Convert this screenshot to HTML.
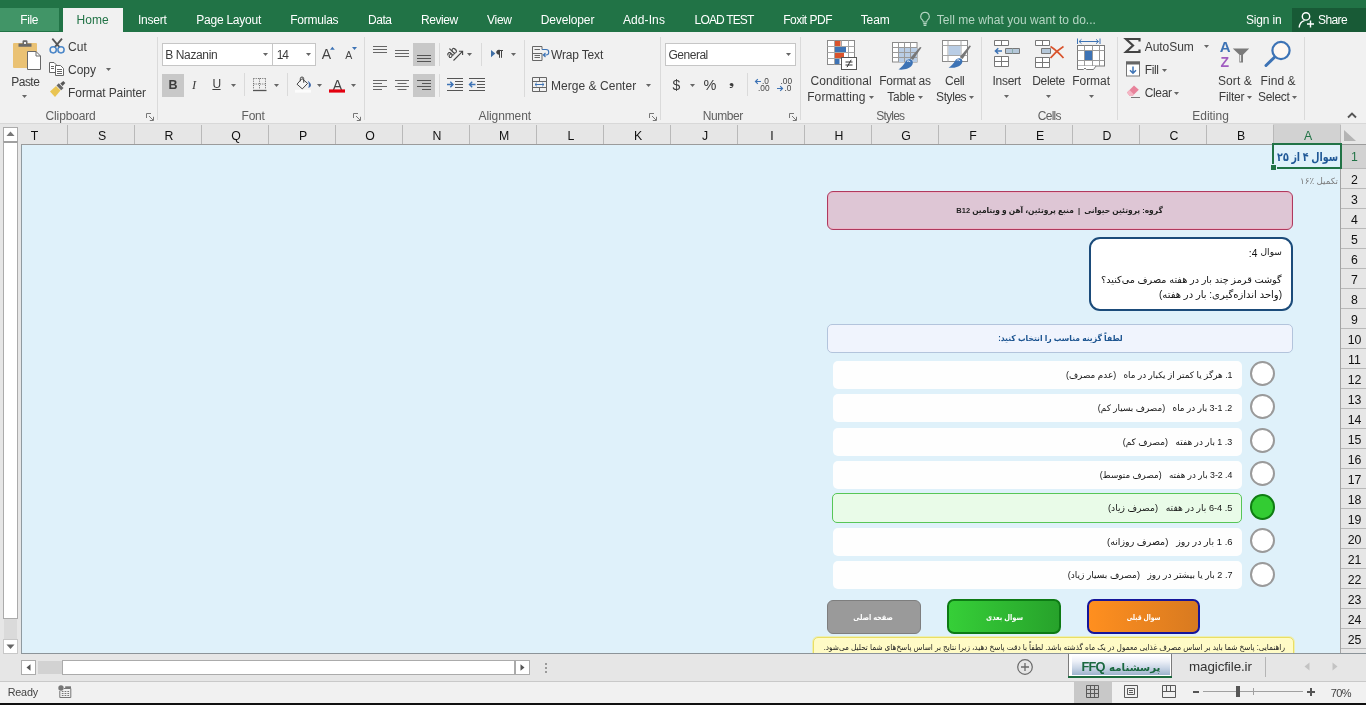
<!DOCTYPE html>
<html lang="fa"><head><meta charset="utf-8"><title>FFQ - Excel</title>
<style>
html,body{margin:0;padding:0;}
body{width:1366px;height:705px;overflow:hidden;background:#f1f1f1;font-family:'Liberation Sans',sans-serif;}
#app{will-change:transform;position:relative;width:1366px;height:705px;overflow:hidden;background:#f1f1f1;}
.b{position:absolute;box-sizing:border-box;display:block;}
.t{position:absolute;white-space:pre;display:block;}
.ch{font-size:12.3px;line-height:18px;text-align:center;}
.rh{font-size:12.3px;line-height:20px;text-align:center;}

</style></head>
<body>
<div id="app">
<div class="b" style="left:0px;top:0px;width:1366px;height:32px;background:#217346;"></div>
<div class="b" style="left:0px;top:8px;width:59px;height:23px;background:#419567;"></div>
<div class="b" style="left:63px;top:8px;width:60px;height:25px;background:#f1f1f1;"></div>
<div class="b" style="left:1292px;top:8px;width:74px;height:24px;background:#185a36;"></div>
<span class="t" style="left:20.2px;top:13.04px;font-size:12px;line-height:15.6px;color:#ffffff;font-weight:400;font-family:'Liberation Sans',sans-serif;letter-spacing:-0.384px;">File</span>
<span class="t" style="left:76.4px;top:13.04px;font-size:12px;line-height:15.6px;color:#217346;font-weight:400;font-family:'Liberation Sans',sans-serif;letter-spacing:0.097px;">Home</span>
<span class="t" style="left:138px;top:13.04px;font-size:12px;line-height:15.6px;color:#ffffff;font-weight:400;font-family:'Liberation Sans',sans-serif;letter-spacing:-0.219px;">Insert</span>
<span class="t" style="left:196.3px;top:13.04px;font-size:12px;line-height:15.6px;color:#ffffff;font-weight:400;font-family:'Liberation Sans',sans-serif;letter-spacing:-0.244px;">Page Layout</span>
<span class="t" style="left:290.2px;top:13.04px;font-size:12px;line-height:15.6px;color:#ffffff;font-weight:400;font-family:'Liberation Sans',sans-serif;letter-spacing:-0.226px;">Formulas</span>
<span class="t" style="left:368px;top:13.04px;font-size:12px;line-height:15.6px;color:#ffffff;font-weight:400;font-family:'Liberation Sans',sans-serif;letter-spacing:-0.437px;">Data</span>
<span class="t" style="left:420.9px;top:13.04px;font-size:12px;line-height:15.6px;color:#ffffff;font-weight:400;font-family:'Liberation Sans',sans-serif;letter-spacing:-0.391px;">Review</span>
<span class="t" style="left:486.9px;top:13.04px;font-size:12px;line-height:15.6px;color:#ffffff;font-weight:400;font-family:'Liberation Sans',sans-serif;letter-spacing:-0.224px;">View</span>
<span class="t" style="left:540.7px;top:13.04px;font-size:12px;line-height:15.6px;color:#ffffff;font-weight:400;font-family:'Liberation Sans',sans-serif;letter-spacing:-0.122px;">Developer</span>
<span class="t" style="left:622.9px;top:13.04px;font-size:12px;line-height:15.6px;color:#ffffff;font-weight:400;font-family:'Liberation Sans',sans-serif;letter-spacing:0.106px;">Add-Ins</span>
<span class="t" style="left:694.6px;top:13.04px;font-size:12px;line-height:15.6px;color:#ffffff;font-weight:400;font-family:'Liberation Sans',sans-serif;letter-spacing:-0.84px;">LOAD TEST</span>
<span class="t" style="left:783.2px;top:13.04px;font-size:12px;line-height:15.6px;color:#ffffff;font-weight:400;font-family:'Liberation Sans',sans-serif;letter-spacing:-0.504px;">Foxit PDF</span>
<span class="t" style="left:860.7px;top:13.04px;font-size:12px;line-height:15.6px;color:#ffffff;font-weight:400;font-family:'Liberation Sans',sans-serif;letter-spacing:-0.111px;">Team</span>
<span class="t" style="left:936.7px;top:13.04px;font-size:12px;line-height:15.6px;color:#b5d5c3;font-weight:400;font-family:'Liberation Sans',sans-serif;letter-spacing:0.041px;">Tell me what you want to do...</span>
<span class="t" style="left:1246px;top:13.04px;font-size:12px;line-height:15.6px;color:#ffffff;font-weight:400;font-family:'Liberation Sans',sans-serif;letter-spacing:-0.17px;">Sign in</span>
<span class="t" style="left:1318px;top:13.04px;font-size:12px;line-height:15.6px;color:#ffffff;font-weight:400;font-family:'Liberation Sans',sans-serif;letter-spacing:-0.605px;">Share</span>
<svg class="b" style="left:919px;top:11px;" width="12" height="18" viewBox="0 0 12 18"><path d="M6 1.2a4.3 4.3 0 0 0-2.6 7.7c.6.6.9 1.3.9 2.1h3.4c0-.8.3-1.5.9-2.1A4.3 4.3 0 0 0 6 1.200z" fill="none" stroke="#b5d5c3" stroke-width="1.1"/><path d="M4.3 12.6h3.4M4.6 14.4h2.800" stroke="#b5d5c3" stroke-width="1.1" fill="none"/></svg>
<svg class="b" style="left:1298px;top:11px;" width="17" height="18" viewBox="0 0 17 18"><circle cx="8" cy="5.4" r="3.7" fill="none" stroke="#fff" stroke-width="1.4"/><path d="M1.2 16.500c.3-4 2.600-6.200 5.300-6.900" fill="none" stroke="#fff" stroke-width="1.4"/><path d="M12.500 9.500v7M9 13h7" stroke="#fff" stroke-width="1.4"/></svg>
<div class="b" style="left:0px;top:32px;width:1366px;height:92px;background:#f1f1f1;"></div>
<div class="b" style="left:63px;top:32px;width:60px;height:2px;background:#f1f1f1;"></div>
<div class="b" style="left:0px;top:123px;width:1366px;height:1px;background:#d8d8d8;"></div>
<div class="b" style="left:0px;top:124px;width:1366px;height:558px;background:#e6e6e6;"></div>
<div class="b" style="left:1273px;top:124px;width:68px;height:20px;background:#d2d2d2;"></div>
<div class="b" style="left:1273px;top:125px;width:1px;height:19px;background:#b9b9b9;"></div>
<span class="t ch" style="left:1288.0px;width:40px;top:127px;color:#217346;">A</span>
<div class="b" style="left:1206px;top:125px;width:1px;height:19px;background:#b9b9b9;"></div>
<span class="t ch" style="left:1221.0px;width:40px;top:127px;color:#111;">B</span>
<div class="b" style="left:1139px;top:125px;width:1px;height:19px;background:#b9b9b9;"></div>
<span class="t ch" style="left:1154.0px;width:40px;top:127px;color:#111;">C</span>
<div class="b" style="left:1072px;top:125px;width:1px;height:19px;background:#b9b9b9;"></div>
<span class="t ch" style="left:1087.0px;width:40px;top:127px;color:#111;">D</span>
<div class="b" style="left:1005px;top:125px;width:1px;height:19px;background:#b9b9b9;"></div>
<span class="t ch" style="left:1020.0px;width:40px;top:127px;color:#111;">E</span>
<div class="b" style="left:938px;top:125px;width:1px;height:19px;background:#b9b9b9;"></div>
<span class="t ch" style="left:953.0px;width:40px;top:127px;color:#111;">F</span>
<div class="b" style="left:871px;top:125px;width:1px;height:19px;background:#b9b9b9;"></div>
<span class="t ch" style="left:886.0px;width:40px;top:127px;color:#111;">G</span>
<div class="b" style="left:804px;top:125px;width:1px;height:19px;background:#b9b9b9;"></div>
<span class="t ch" style="left:819.0px;width:40px;top:127px;color:#111;">H</span>
<div class="b" style="left:737px;top:125px;width:1px;height:19px;background:#b9b9b9;"></div>
<span class="t ch" style="left:752.0px;width:40px;top:127px;color:#111;">I</span>
<div class="b" style="left:670px;top:125px;width:1px;height:19px;background:#b9b9b9;"></div>
<span class="t ch" style="left:685.0px;width:40px;top:127px;color:#111;">J</span>
<div class="b" style="left:603px;top:125px;width:1px;height:19px;background:#b9b9b9;"></div>
<span class="t ch" style="left:618.0px;width:40px;top:127px;color:#111;">K</span>
<div class="b" style="left:536px;top:125px;width:1px;height:19px;background:#b9b9b9;"></div>
<span class="t ch" style="left:551.0px;width:40px;top:127px;color:#111;">L</span>
<div class="b" style="left:469px;top:125px;width:1px;height:19px;background:#b9b9b9;"></div>
<span class="t ch" style="left:484.0px;width:40px;top:127px;color:#111;">M</span>
<div class="b" style="left:402px;top:125px;width:1px;height:19px;background:#b9b9b9;"></div>
<span class="t ch" style="left:417.0px;width:40px;top:127px;color:#111;">N</span>
<div class="b" style="left:335px;top:125px;width:1px;height:19px;background:#b9b9b9;"></div>
<span class="t ch" style="left:350.0px;width:40px;top:127px;color:#111;">O</span>
<div class="b" style="left:268px;top:125px;width:1px;height:19px;background:#b9b9b9;"></div>
<span class="t ch" style="left:283.0px;width:40px;top:127px;color:#111;">P</span>
<div class="b" style="left:201px;top:125px;width:1px;height:19px;background:#b9b9b9;"></div>
<span class="t ch" style="left:216.0px;width:40px;top:127px;color:#111;">Q</span>
<div class="b" style="left:134px;top:125px;width:1px;height:19px;background:#b9b9b9;"></div>
<span class="t ch" style="left:149.0px;width:40px;top:127px;color:#111;">R</span>
<div class="b" style="left:67px;top:125px;width:1px;height:19px;background:#b9b9b9;"></div>
<span class="t ch" style="left:82.0px;width:40px;top:127px;color:#111;">S</span>
<span class="t ch" style="left:14.5px;width:40px;top:127px;color:#111;">T</span>
<div class="b" style="left:1340px;top:125px;width:1px;height:19px;background:#b9b9b9;"></div>
<div class="b" style="left:21px;top:144px;width:1345px;height:1px;background:#9b9b9b;"></div>
<svg class="b" style="left:1342px;top:124px;" width="24" height="20" viewBox="0 0 24 20"><path d="M2 6V17H14Z" fill="#b4b4b4"/></svg>
<div class="b" style="left:21px;top:145px;width:1321px;height:509px;background:#dff1fa;border-left:1px solid #8f9aa0;border-bottom:1px solid #8c9499;"></div>
<div class="b" style="left:1341px;top:145px;width:25px;height:508px;background:#e6e6e6;"></div>
<div class="b" style="left:1340px;top:145px;width:1px;height:508px;background:#a3a3a3;"></div>
<div class="b" style="left:1341px;top:145px;width:25px;height:23px;background:#d2d2d2;"></div>
<div class="b" style="left:1341px;top:168px;width:25px;height:1px;background:#b9b9b9;"></div>
<span class="t rh" style="left:1342px;width:25px;top:146.5px;color:#217346;">1</span>
<div class="b" style="left:1341px;top:188px;width:25px;height:1px;background:#b9b9b9;"></div>
<span class="t rh" style="left:1342px;width:25px;top:170.0px;color:#111;">2</span>
<div class="b" style="left:1341px;top:208px;width:25px;height:1px;background:#b9b9b9;"></div>
<span class="t rh" style="left:1342px;width:25px;top:190.0px;color:#111;">3</span>
<div class="b" style="left:1341px;top:228px;width:25px;height:1px;background:#b9b9b9;"></div>
<span class="t rh" style="left:1342px;width:25px;top:210.0px;color:#111;">4</span>
<div class="b" style="left:1341px;top:248px;width:25px;height:1px;background:#b9b9b9;"></div>
<span class="t rh" style="left:1342px;width:25px;top:230.0px;color:#111;">5</span>
<div class="b" style="left:1341px;top:268px;width:25px;height:1px;background:#b9b9b9;"></div>
<span class="t rh" style="left:1342px;width:25px;top:250.0px;color:#111;">6</span>
<div class="b" style="left:1341px;top:288px;width:25px;height:1px;background:#b9b9b9;"></div>
<span class="t rh" style="left:1342px;width:25px;top:270.0px;color:#111;">7</span>
<div class="b" style="left:1341px;top:308px;width:25px;height:1px;background:#b9b9b9;"></div>
<span class="t rh" style="left:1342px;width:25px;top:290.0px;color:#111;">8</span>
<div class="b" style="left:1341px;top:328px;width:25px;height:1px;background:#b9b9b9;"></div>
<span class="t rh" style="left:1342px;width:25px;top:310.0px;color:#111;">9</span>
<div class="b" style="left:1341px;top:348px;width:25px;height:1px;background:#b9b9b9;"></div>
<span class="t rh" style="left:1342px;width:25px;top:330.0px;color:#111;">10</span>
<div class="b" style="left:1341px;top:368px;width:25px;height:1px;background:#b9b9b9;"></div>
<span class="t rh" style="left:1342px;width:25px;top:350.0px;color:#111;">11</span>
<div class="b" style="left:1341px;top:388px;width:25px;height:1px;background:#b9b9b9;"></div>
<span class="t rh" style="left:1342px;width:25px;top:370.0px;color:#111;">12</span>
<div class="b" style="left:1341px;top:408px;width:25px;height:1px;background:#b9b9b9;"></div>
<span class="t rh" style="left:1342px;width:25px;top:390.0px;color:#111;">13</span>
<div class="b" style="left:1341px;top:428px;width:25px;height:1px;background:#b9b9b9;"></div>
<span class="t rh" style="left:1342px;width:25px;top:410.0px;color:#111;">14</span>
<div class="b" style="left:1341px;top:448px;width:25px;height:1px;background:#b9b9b9;"></div>
<span class="t rh" style="left:1342px;width:25px;top:430.0px;color:#111;">15</span>
<div class="b" style="left:1341px;top:468px;width:25px;height:1px;background:#b9b9b9;"></div>
<span class="t rh" style="left:1342px;width:25px;top:450.0px;color:#111;">16</span>
<div class="b" style="left:1341px;top:488px;width:25px;height:1px;background:#b9b9b9;"></div>
<span class="t rh" style="left:1342px;width:25px;top:470.0px;color:#111;">17</span>
<div class="b" style="left:1341px;top:508px;width:25px;height:1px;background:#b9b9b9;"></div>
<span class="t rh" style="left:1342px;width:25px;top:490.0px;color:#111;">18</span>
<div class="b" style="left:1341px;top:528px;width:25px;height:1px;background:#b9b9b9;"></div>
<span class="t rh" style="left:1342px;width:25px;top:510.0px;color:#111;">19</span>
<div class="b" style="left:1341px;top:548px;width:25px;height:1px;background:#b9b9b9;"></div>
<span class="t rh" style="left:1342px;width:25px;top:530.0px;color:#111;">20</span>
<div class="b" style="left:1341px;top:568px;width:25px;height:1px;background:#b9b9b9;"></div>
<span class="t rh" style="left:1342px;width:25px;top:550.0px;color:#111;">21</span>
<div class="b" style="left:1341px;top:588px;width:25px;height:1px;background:#b9b9b9;"></div>
<span class="t rh" style="left:1342px;width:25px;top:570.0px;color:#111;">22</span>
<div class="b" style="left:1341px;top:608px;width:25px;height:1px;background:#b9b9b9;"></div>
<span class="t rh" style="left:1342px;width:25px;top:590.0px;color:#111;">23</span>
<div class="b" style="left:1341px;top:628px;width:25px;height:1px;background:#b9b9b9;"></div>
<span class="t rh" style="left:1342px;width:25px;top:610.0px;color:#111;">24</span>
<div class="b" style="left:1341px;top:648px;width:25px;height:1px;background:#b9b9b9;"></div>
<span class="t rh" style="left:1342px;width:25px;top:630.0px;color:#111;">25</span>
<div class="b" style="left:1342px;top:653px;width:24px;height:1px;background:#8c9499;"></div>
<div class="b" style="left:3px;top:127px;width:15px;height:15px;background:#fff;border:1px solid #ababab;"></div>
<svg class="b" style="left:6px;top:131px;" width="9" height="6" viewBox="0 0 9 6"><path d="M4.500 .5L8.500 5H.5Z" fill="#777"/></svg>
<div class="b" style="left:3px;top:141px;width:15px;height:478px;background:#fff;border:1px solid #ababab;border-top:2px solid #a0a0a0;"></div>
<div class="b" style="left:4px;top:619px;width:13px;height:20px;background:#dadada;"></div>
<div class="b" style="left:3px;top:639px;width:15px;height:15px;background:#fff;border:1px solid #c8c8c8;"></div>
<svg class="b" style="left:6px;top:644px;" width="9" height="6" viewBox="0 0 9 6"><path d="M.5 .5H8.500L4.500 5Z" fill="#666"/></svg>
<div class="b" style="left:157.0px;top:37px;width:1.0px;height:83px;background:#dadada;"></div>
<div class="b" style="left:364.0px;top:37px;width:1.0px;height:83px;background:#dadada;"></div>
<div class="b" style="left:660.0px;top:37px;width:1.0px;height:83px;background:#dadada;"></div>
<div class="b" style="left:800.0px;top:37px;width:1.0px;height:83px;background:#dadada;"></div>
<div class="b" style="left:981.0px;top:37px;width:1.0px;height:83px;background:#dadada;"></div>
<div class="b" style="left:1117.0px;top:37px;width:1.0px;height:83px;background:#dadada;"></div>
<div class="b" style="left:1304.0px;top:37px;width:1.0px;height:83px;background:#dadada;"></div>
<div class="b" style="left:243.5px;top:73px;width:1.0px;height:23px;background:#dadada;"></div>
<div class="b" style="left:287.0px;top:73px;width:1.0px;height:23px;background:#dadada;"></div>
<div class="b" style="left:439.0px;top:43px;width:1.0px;height:23px;background:#dadada;"></div>
<div class="b" style="left:480.5px;top:43px;width:1.0px;height:23px;background:#dadada;"></div>
<div class="b" style="left:524.0px;top:40px;width:1.0px;height:57px;background:#dadada;"></div>
<div class="b" style="left:747.0px;top:73px;width:1.0px;height:23px;background:#dadada;"></div>
<div class="b" style="left:439.0px;top:74px;width:1.0px;height:23px;background:#dadada;"></div>
<span class="t" style="left:45.6px;top:109.24px;font-size:12px;line-height:15.6px;color:#5e5e5e;font-weight:400;font-family:'Liberation Sans',sans-serif;letter-spacing:-0.152px;">Clipboard</span>
<span class="t" style="left:241.6px;top:109.24px;font-size:12px;line-height:15.6px;color:#5e5e5e;font-weight:400;font-family:'Liberation Sans',sans-serif;letter-spacing:-0.253px;">Font</span>
<span class="t" style="left:478.5px;top:109.24px;font-size:12px;line-height:15.6px;color:#5e5e5e;font-weight:400;font-family:'Liberation Sans',sans-serif;letter-spacing:-0.096px;">Alignment</span>
<span class="t" style="left:702.8px;top:109.24px;font-size:12px;line-height:15.6px;color:#5e5e5e;font-weight:400;font-family:'Liberation Sans',sans-serif;letter-spacing:-0.447px;">Number</span>
<span class="t" style="left:876.3px;top:109.24px;font-size:12px;line-height:15.6px;color:#5e5e5e;font-weight:400;font-family:'Liberation Sans',sans-serif;letter-spacing:-0.78px;">Styles</span>
<span class="t" style="left:1037.8px;top:109.24px;font-size:12px;line-height:15.6px;color:#5e5e5e;font-weight:400;font-family:'Liberation Sans',sans-serif;letter-spacing:-0.734px;">Cells</span>
<span class="t" style="left:1192.3px;top:109.24px;font-size:12px;line-height:15.6px;color:#5e5e5e;font-weight:400;font-family:'Liberation Sans',sans-serif;letter-spacing:-0.027px;">Editing</span>
<svg class="b" style="left:146px;top:113px;" width="8" height="8" viewBox="0 0 8 8"><path d="M.5 5V.5H5" fill="none" stroke="#777" stroke-width="1"/><path d="M3 3l4 4M7.500 3.800V7.500H3.800" fill="none" stroke="#777" stroke-width="1"/></svg>
<svg class="b" style="left:353px;top:113px;" width="8" height="8" viewBox="0 0 8 8"><path d="M.5 5V.5H5" fill="none" stroke="#777" stroke-width="1"/><path d="M3 3l4 4M7.500 3.800V7.500H3.800" fill="none" stroke="#777" stroke-width="1"/></svg>
<svg class="b" style="left:649px;top:113px;" width="8" height="8" viewBox="0 0 8 8"><path d="M.5 5V.5H5" fill="none" stroke="#777" stroke-width="1"/><path d="M3 3l4 4M7.500 3.800V7.500H3.800" fill="none" stroke="#777" stroke-width="1"/></svg>
<svg class="b" style="left:789px;top:113px;" width="8" height="8" viewBox="0 0 8 8"><path d="M.5 5V.5H5" fill="none" stroke="#777" stroke-width="1"/><path d="M3 3l4 4M7.500 3.800V7.500H3.800" fill="none" stroke="#777" stroke-width="1"/></svg>
<svg class="b" style="left:1347px;top:112px;" width="10" height="7" viewBox="0 0 10 7"><path d="M1 5.500L5 1.500L9 5.500" fill="none" stroke="#555" stroke-width="1.900"/></svg>
<span class="t" style="left:11.3px;top:74.64px;font-size:12px;line-height:15.6px;color:#3c3c3c;font-weight:400;font-family:'Liberation Sans',sans-serif;letter-spacing:-0.537px;">Paste</span>
<svg class="b" style="left:21.8px;top:94.5px;" width="5" height="3" viewBox="0 0 5 3"><path d="M0 0H5L2.5 3Z" fill="#666"/></svg>
<span class="t" style="left:68.1px;top:39.84px;font-size:12px;line-height:15.6px;color:#3c3c3c;font-weight:400;font-family:'Liberation Sans',sans-serif;letter-spacing:0.042px;">Cut</span>
<span class="t" style="left:68.1px;top:63.24px;font-size:12px;line-height:15.6px;color:#3c3c3c;font-weight:400;font-family:'Liberation Sans',sans-serif;letter-spacing:-0.054px;">Copy</span>
<svg class="b" style="left:105.9px;top:68.0px;" width="5" height="3" viewBox="0 0 5 3"><path d="M0 0H5L2.5 3Z" fill="#666"/></svg>
<span class="t" style="left:68.1px;top:85.84px;font-size:12px;line-height:15.6px;color:#3c3c3c;font-weight:400;font-family:'Liberation Sans',sans-serif;letter-spacing:-0.104px;">Format Painter</span>
<div class="b" style="left:162px;top:43px;width:111px;height:23px;background:#fff;border:1px solid #c6c6c6;"></div>
<div class="b" style="left:273px;top:43px;width:43px;height:23px;background:#fff;border:1px solid #c6c6c6;border-left:none;"></div>
<span class="t" style="left:165.2px;top:47.84px;font-size:12px;line-height:15.6px;color:#3c3c3c;font-weight:400;font-family:'Liberation Sans',sans-serif;letter-spacing:-0.363px;">B Nazanin</span>
<svg class="b" style="left:262.5px;top:53.0px;" width="5" height="3" viewBox="0 0 5 3"><path d="M0 0H5L2.5 3Z" fill="#666"/></svg>
<span class="t" style="left:276.7px;top:47.84px;font-size:12px;line-height:15.6px;color:#3c3c3c;font-weight:400;font-family:'Liberation Sans',sans-serif;letter-spacing:-1.024px;">14</span>
<svg class="b" style="left:306.0px;top:53.0px;" width="5" height="3" viewBox="0 0 5 3"><path d="M0 0H5L2.5 3Z" fill="#666"/></svg>
<div class="b" style="left:162px;top:74px;width:22px;height:23px;background:#c8c8c8;"></div>
<span class="t" style="left:168.6px;top:76.84px;font-size:12.5px;line-height:16.25px;color:#3c3c3c;font-weight:700;font-family:'Liberation Sans',sans-serif;letter-spacing:-0.827px;">B</span>
<span class="t" style="left:192px;top:76.84px;font-size:12.5px;line-height:16.25px;color:#3c3c3c;font-weight:400;font-family:'Liberation Serif',serif;letter-spacing:0.836px;font-style:italic;">I</span>
<span class="t" style="left:212.4px;top:77.04px;font-size:12px;line-height:15.6px;color:#3c3c3c;font-weight:400;font-family:'Liberation Sans',sans-serif;letter-spacing:-0.466px;text-decoration:underline;">U</span>
<svg class="b" style="left:230.9px;top:84.0px;" width="5" height="3" viewBox="0 0 5 3"><path d="M0 0H5L2.5 3Z" fill="#666"/></svg>
<svg class="b" style="left:273.7px;top:84.0px;" width="5" height="3" viewBox="0 0 5 3"><path d="M0 0H5L2.5 3Z" fill="#666"/></svg>
<svg class="b" style="left:316.7px;top:84.0px;" width="5" height="3" viewBox="0 0 5 3"><path d="M0 0H5L2.5 3Z" fill="#666"/></svg>
<svg class="b" style="left:350.8px;top:84.0px;" width="5" height="3" viewBox="0 0 5 3"><path d="M0 0H5L2.5 3Z" fill="#666"/></svg>
<div class="b" style="left:413px;top:43px;width:22px;height:23px;background:#c8c8c8;"></div>
<div class="b" style="left:413px;top:74px;width:22px;height:23px;background:#c8c8c8;"></div>
<span class="t" style="left:551px;top:47.84px;font-size:12px;line-height:15.6px;color:#3c3c3c;font-weight:400;font-family:'Liberation Sans',sans-serif;letter-spacing:-0.164px;">Wrap Text</span>
<span class="t" style="left:551px;top:78.64px;font-size:12px;line-height:15.6px;color:#3c3c3c;font-weight:400;font-family:'Liberation Sans',sans-serif;letter-spacing:0.035px;">Merge &amp; Center</span>
<svg class="b" style="left:646.2px;top:84.0px;" width="5" height="3" viewBox="0 0 5 3"><path d="M0 0H5L2.5 3Z" fill="#666"/></svg>
<svg class="b" style="left:467.2px;top:53.0px;" width="5" height="3" viewBox="0 0 5 3"><path d="M0 0H5L2.5 3Z" fill="#666"/></svg>
<svg class="b" style="left:511.0px;top:53.0px;" width="5" height="3" viewBox="0 0 5 3"><path d="M0 0H5L2.5 3Z" fill="#666"/></svg>
<div class="b" style="left:665px;top:43px;width:131px;height:23px;background:#fff;border:1px solid #c6c6c6;"></div>
<span class="t" style="left:668.5px;top:47.84px;font-size:12px;line-height:15.6px;color:#3c3c3c;font-weight:400;font-family:'Liberation Sans',sans-serif;letter-spacing:-0.485px;">General</span>
<svg class="b" style="left:786.2px;top:53.0px;" width="5" height="3" viewBox="0 0 5 3"><path d="M0 0H5L2.5 3Z" fill="#666"/></svg>
<span class="t" style="left:672.6px;top:76.25px;font-size:14px;line-height:18.2px;color:#3c3c3c;font-weight:400;font-family:'Liberation Sans',sans-serif;letter-spacing:-0.388px;">$</span>
<svg class="b" style="left:689.8px;top:84.0px;" width="5" height="3" viewBox="0 0 5 3"><path d="M0 0H5L2.5 3Z" fill="#666"/></svg>
<span class="t" style="left:703.6px;top:75.55px;font-size:14.5px;line-height:18.85px;color:#3c3c3c;font-weight:400;font-family:'Liberation Sans',sans-serif;letter-spacing:0.506px;">%</span>
<span class="t" style="left:729.4px;top:73.05px;font-size:13px;line-height:16.9px;color:#3c3c3c;font-weight:400;font-family:'DejaVu Sans',sans-serif;letter-spacing:-0.87px;">❟</span>
<span class="t" style="left:810.4px;top:74.14px;font-size:12px;line-height:15.6px;color:#3c3c3c;font-weight:400;font-family:'Liberation Sans',sans-serif;letter-spacing:0.124px;">Conditional</span>
<span class="t" style="left:807.2px;top:90.14px;font-size:12px;line-height:15.6px;color:#3c3c3c;font-weight:400;font-family:'Liberation Sans',sans-serif;letter-spacing:0.095px;">Formatting</span>
<svg class="b" style="left:868.8px;top:95.5px;" width="5" height="3" viewBox="0 0 5 3"><path d="M0 0H5L2.5 3Z" fill="#666"/></svg>
<span class="t" style="left:879.3px;top:74.14px;font-size:12px;line-height:15.6px;color:#3c3c3c;font-weight:400;font-family:'Liberation Sans',sans-serif;letter-spacing:-0.301px;">Format as</span>
<span class="t" style="left:887.3px;top:90.14px;font-size:12px;line-height:15.6px;color:#3c3c3c;font-weight:400;font-family:'Liberation Sans',sans-serif;letter-spacing:-0.237px;">Table</span>
<svg class="b" style="left:918.1px;top:95.5px;" width="5" height="3" viewBox="0 0 5 3"><path d="M0 0H5L2.5 3Z" fill="#666"/></svg>
<span class="t" style="left:945.1px;top:74.14px;font-size:12px;line-height:15.6px;color:#3c3c3c;font-weight:400;font-family:'Liberation Sans',sans-serif;letter-spacing:-0.343px;">Cell</span>
<span class="t" style="left:936.1px;top:90.14px;font-size:12px;line-height:15.6px;color:#3c3c3c;font-weight:400;font-family:'Liberation Sans',sans-serif;letter-spacing:-0.43px;">Styles</span>
<svg class="b" style="left:968.9px;top:95.5px;" width="5" height="3" viewBox="0 0 5 3"><path d="M0 0H5L2.5 3Z" fill="#666"/></svg>
<span class="t" style="left:992.5px;top:74.14px;font-size:12px;line-height:15.6px;color:#3c3c3c;font-weight:400;font-family:'Liberation Sans',sans-serif;letter-spacing:-0.286px;">Insert</span>
<svg class="b" style="left:1004.0px;top:94.5px;" width="5" height="3" viewBox="0 0 5 3"><path d="M0 0H5L2.5 3Z" fill="#666"/></svg>
<span class="t" style="left:1032.3px;top:74.14px;font-size:12px;line-height:15.6px;color:#3c3c3c;font-weight:400;font-family:'Liberation Sans',sans-serif;letter-spacing:-0.365px;">Delete</span>
<svg class="b" style="left:1045.8px;top:94.5px;" width="5" height="3" viewBox="0 0 5 3"><path d="M0 0H5L2.5 3Z" fill="#666"/></svg>
<span class="t" style="left:1072.3px;top:74.14px;font-size:12px;line-height:15.6px;color:#3c3c3c;font-weight:400;font-family:'Liberation Sans',sans-serif;letter-spacing:-0.067px;">Format</span>
<svg class="b" style="left:1088.5px;top:94.5px;" width="5" height="3" viewBox="0 0 5 3"><path d="M0 0H5L2.5 3Z" fill="#666"/></svg>
<span class="t" style="left:1144.7px;top:39.84px;font-size:12px;line-height:15.6px;color:#3c3c3c;font-weight:400;font-family:'Liberation Sans',sans-serif;letter-spacing:-0.037px;">AutoSum</span>
<svg class="b" style="left:1204.3px;top:45.0px;" width="5" height="3" viewBox="0 0 5 3"><path d="M0 0H5L2.5 3Z" fill="#666"/></svg>
<span class="t" style="left:1144.7px;top:62.84px;font-size:12px;line-height:15.6px;color:#3c3c3c;font-weight:400;font-family:'Liberation Sans',sans-serif;letter-spacing:-0.332px;">Fill</span>
<svg class="b" style="left:1162.2px;top:68.5px;" width="5" height="3" viewBox="0 0 5 3"><path d="M0 0H5L2.5 3Z" fill="#666"/></svg>
<span class="t" style="left:1144.7px;top:86.24px;font-size:12px;line-height:15.6px;color:#3c3c3c;font-weight:400;font-family:'Liberation Sans',sans-serif;letter-spacing:-0.335px;">Clear</span>
<svg class="b" style="left:1173.7px;top:91.5px;" width="5" height="3" viewBox="0 0 5 3"><path d="M0 0H5L2.5 3Z" fill="#666"/></svg>
<span class="t" style="left:1218px;top:74.14px;font-size:12px;line-height:15.6px;color:#3c3c3c;font-weight:400;font-family:'Liberation Sans',sans-serif;letter-spacing:0.076px;">Sort &amp;</span>
<span class="t" style="left:1218.8px;top:90.14px;font-size:12px;line-height:15.6px;color:#3c3c3c;font-weight:400;font-family:'Liberation Sans',sans-serif;letter-spacing:-0.194px;">Filter</span>
<svg class="b" style="left:1246.8px;top:95.5px;" width="5" height="3" viewBox="0 0 5 3"><path d="M0 0H5L2.5 3Z" fill="#666"/></svg>
<span class="t" style="left:1260.6px;top:74.14px;font-size:12px;line-height:15.6px;color:#3c3c3c;font-weight:400;font-family:'Liberation Sans',sans-serif;letter-spacing:0.07px;">Find &amp;</span>
<span class="t" style="left:1258.1px;top:90.14px;font-size:12px;line-height:15.6px;color:#3c3c3c;font-weight:400;font-family:'Liberation Sans',sans-serif;letter-spacing:-0.342px;">Select</span>
<svg class="b" style="left:1291.9px;top:95.5px;" width="5" height="3" viewBox="0 0 5 3"><path d="M0 0H5L2.5 3Z" fill="#666"/></svg>
<span class="t" style="left:321.8px;top:45.25px;font-size:14px;line-height:18.2px;color:#444;font-weight:400;font-family:'Liberation Sans',sans-serif;letter-spacing:0.862px;">A</span>
<span class="t" style="left:345.2px;top:48.74px;font-size:10.5px;line-height:13.65px;color:#444;font-weight:400;font-family:'Liberation Sans',sans-serif;letter-spacing:0.396px;">A</span>
<span class="t" style="left:332.8px;top:75.85px;font-size:14.2px;line-height:18.46px;color:#444;font-weight:400;font-family:'Liberation Sans',sans-serif;letter-spacing:-0.272px;">A</span>
<svg class="b" style="left:0;top:0" width="1366" height="124" viewBox="0 0 1366 124"><rect x="13" y="43" width="24" height="25" rx="1" fill="#eac274"/><path d="M18.500 46.800v-3.300h4v-2a1.200 1.200 0 0 1 1.200-1.200h2.600a1.200 1.200 0 0 1 1.200 1.200v2h4v3.300z" fill="#6a6a6a"/><rect x="24" y="42" width="2" height="2" fill="#eee"/><path d="M27.500 51.500h8.500l4.500 4.500v13.500h-13z" fill="#fff" stroke="#6a6a6a" stroke-width="1"/><path d="M36 51.500v4.500h4.500" fill="none" stroke="#6a6a6a" stroke-width="1"/><path d="M52.300 38.600l7.400 8.700M62 38.600l-7.400 8.700" stroke="#555" stroke-width="1.800" fill="none"/><circle cx="53.200" cy="49.800" r="3.100" fill="none" stroke="#4a86c8" stroke-width="1.500"/><circle cx="61" cy="49.800" r="3.100" fill="none" stroke="#4a86c8" stroke-width="1.500"/><path d="M49.500 62.500h4.500l2.500 2.500v7.500h-7z" fill="#fff" stroke="#666" stroke-width="1"/><path d="M51 66.500h3M51 68.500h3" stroke="#666" stroke-width="1"/><path d="M55.500 65.500h5l3 3v7h-8z" fill="#fff" stroke="#666" stroke-width="1"/><path d="M57 69.500h5M57 71.500h5M57 73.500h5" stroke="#666" stroke-width="1"/><path d="M50 91.500l6-5.500 4.500 4.500-5.500 6.500z" fill="#e9c452"/><path d="M56.500 85.500l2.300-2.200 4.700 4.700-2.300 2.300z" fill="#666"/><path d="M60.300 83.500l3-2.600 2 2-2.700 3z" fill="#555"/><path d="M330 49.700l2.400-2.900 2.400 2.900z" fill="#3d73b5"/><path d="M352 47l2.500 3 2.500-3z" fill="#3d73b5"/><path d="M253.500 78.500h12.500M253.500 84h12.500M253.500 78.500v10.500M259.500 78.500v10.500M265.500 78.500v10.500" stroke="#666" stroke-width="1" stroke-dasharray="1 1.200" fill="none"/><path d="M253 90.500h13.500" stroke="#555" stroke-width="1.300"/><path d="M297 84.200l5-5.600 5.600 4.800-5.300 5.500z" fill="#f6f6f6" stroke="#444" stroke-width="1"/><path d="M300.300 81.300v-2.600a1.700 1.700 0 0 1 3.400 0v4" fill="none" stroke="#444" stroke-width="1"/><path d="M307.700 80.800c2.400 1.300 3.600 3.600 3.200 5-.3 1.200-1.500 1.900-2.700 2.100 1-2 1-4.400-.5-7.100z" fill="#3f68a8"/><rect x="295" y="89.800" width="16" height="2.800" fill="#fcfcfc"/><rect x="329" y="89.400" width="16" height="3.200" fill="#e3000f"/><path d="M373 46.5H387" stroke="#666" stroke-width="1"/><path d="M373 49.5H387" stroke="#666" stroke-width="1"/><path d="M373 52.5H387" stroke="#666" stroke-width="1"/><path d="M395 50.5H409" stroke="#666" stroke-width="1"/><path d="M395 53.5H409" stroke="#666" stroke-width="1"/><path d="M395 56.5H409" stroke="#666" stroke-width="1"/><path d="M417 55.5H431" stroke="#555" stroke-width="1"/><path d="M417 58.5H431" stroke="#555" stroke-width="1"/><path d="M417 61.5H431" stroke="#555" stroke-width="1"/><path d="M373 80.5H387" stroke="#666" stroke-width="1"/><path d="M373 83.5H382" stroke="#666" stroke-width="1"/><path d="M373 86.5H387" stroke="#666" stroke-width="1"/><path d="M373 89.5H382" stroke="#666" stroke-width="1"/><path d="M395 80.5H409" stroke="#666" stroke-width="1"/><path d="M397.5 83.5H406.5" stroke="#666" stroke-width="1"/><path d="M395 86.5H409" stroke="#666" stroke-width="1"/><path d="M397.5 89.5H406.5" stroke="#666" stroke-width="1"/><path d="M417 80.5H431" stroke="#555" stroke-width="1"/><path d="M422 83.5H431" stroke="#555" stroke-width="1"/><path d="M417 86.5H431" stroke="#555" stroke-width="1"/><path d="M422 89.5H431" stroke="#555" stroke-width="1"/><text x="0" y="0" transform="translate(450,58.700) rotate(-45)" font-family="Liberation Sans,sans-serif" font-size="10.200" fill="#3a3a3a" stroke="#3a3a3a" stroke-width=".25">ab</text><path d="M453.500 60.500l9-9.100M458.900 51.200h3.700v3.700" stroke="#444" stroke-width="1.100" fill="none"/><path d="M491 50v7.200l4.300-3.600z" fill="#3e6ea5"/><path d="M498 50.500h5M499.500 50.500v7.300M501.500 50.500v7.300" stroke="#444" stroke-width="1" fill="none"/><path d="M499.500 50a2.900 2.200 0 0 0 0 4.400z" fill="#444" stroke="#444" stroke-width=".7"/><path d="M447 78.500H463M447 90.500H463" stroke="#555" stroke-width="1"/><path d="M455 81.500H463M455 84.500H463M455 87.500H463" stroke="#555" stroke-width="1"/><path d="M447 84.500H453M450.3 81.800L453 84.500L450.3 87.200" stroke="#3d73b5" stroke-width="1.400" fill="none"/><path d="M469 78.500H485M469 90.500H485" stroke="#555" stroke-width="1"/><path d="M477 81.500H485M477 84.500H485M477 87.500H485" stroke="#555" stroke-width="1"/><path d="M475.5 84.500H469.5M472.2 81.800L469.5 84.500L472.2 87.200" stroke="#3d73b5" stroke-width="1.400" fill="none"/><path d="M532.500 46.500h9.500M532.500 46.500v14h9.500v-7M532.500 53.500h9.500M542 46.500v3" stroke="#666" stroke-width="1" fill="none"/><path d="M534.500 49.500h5.500M534.500 55.500h5.500M534.500 57.500h5.500" stroke="#666" stroke-width="1"/><path d="M542 49.500h4a1.800 1.800 0 0 1 0 5.500h-2.500M545.500 53l-2.200 2 2.200 2" stroke="#3d73b5" stroke-width="1.100" fill="none"/><path d="M532.500 77.500h14v14h-14zM532.500 81.500h14M532.500 87.500h14M539.500 77.500v4M539.500 87.500v4" stroke="#666" stroke-width="1" fill="none"/><path d="M535 84.500h9M536.800 82.800l-1.800 1.700 1.800 1.700M542.200 82.800l1.800 1.700-1.800 1.700" stroke="#3d73b5" stroke-width="1" fill="none"/><path d="M761 81.500H755.5M757.8 79.200L755.5 81.500L757.8 83.800" stroke="#3d73b5" stroke-width="1.200" fill="none"/><text x="762" y="84.300" font-family="Liberation Sans,sans-serif" font-size="8.300" fill="#444">.0</text><text x="758" y="91" font-family="Liberation Sans,sans-serif" font-size="8.300" fill="#444">.00</text><text x="780.5" y="84.300" font-family="Liberation Sans,sans-serif" font-size="8.300" fill="#444">.00</text><path d="M777 88.500H782.5M780.2 86.200L782.5 88.500L780.2 90.800" stroke="#3d73b5" stroke-width="1.200" fill="none"/><text x="784.5" y="91" font-family="Liberation Sans,sans-serif" font-size="8.300" fill="#444">.0</text><rect x="827.500" y="40.500" width="27" height="24" fill="#fff" stroke="#8a8a8a" stroke-width="1"/><path d="M834.500 40.500v24M841.500 40.500v24M848.500 40.500v24M827.500 46.500h27M827.500 52.500h27M827.500 58.500h27" stroke="#a6a6a6" stroke-width="1"/><rect x="835" y="41" width="5.500" height="5" fill="#d9532c"/><rect x="835" y="47" width="11" height="5" fill="#3d73b5"/><rect x="835" y="53" width="9" height="5" fill="#d9532c"/><rect x="835" y="59" width="4.500" height="5" fill="#3d73b5"/><rect x="841.500" y="57.500" width="15" height="12" fill="#fff" stroke="#555" stroke-width="1"/><path d="M845.500 62h7M845.500 65h7M851.200 59.800l-4.200 7.400" stroke="#333" stroke-width="1" fill="none"/><rect x="892.500" y="42.500" width="24.500" height="19.500" fill="#fff" stroke="#8a8a8a" stroke-width="1"/><rect x="899" y="47.500" width="18" height="14.500" fill="#b9cde5"/><path d="M898.500 42.500v19.500M904.500 42.500v19.500M910.500 42.500v19.500M892.500 47.500h24.500M892.500 52.500h24.500M892.500 57.500h24.500" stroke="#9a9a9a" stroke-width="1" fill="none"/><path d="M921.500 47.500l-8.500 12.500-2.800-2 9.800-11z" fill="#777"/><path d="M912.300 60.800c-2-2.600-5.300-1.800-7 1.200-1.500 2.700-3.800 5.500-6.800 7.500 5.500.6 11.500-.8 13.800-4.700.7-1.300.7-2.800 0-4z" fill="#3d73b5"/><path d="M907 61.500a2 2 0 0 1 3.200.6" stroke="#fff" stroke-width="1" fill="none"/><rect x="942.500" y="40.500" width="25" height="21" fill="#fff" stroke="#8a8a8a" stroke-width="1"/><path d="M948 40.500v21M961 40.500v21M942.500 45.500h25M942.500 55.500h25" stroke="#a6a6a6" stroke-width="1"/><rect x="948.500" y="46" width="12" height="9" fill="#b9cde5"/><path d="M971 46l-8.300 13-2.800-2 9.600-11.500z" fill="#777"/><path d="M962 59.800c-2-2.600-5.300-1.800-7 1.200-1.300 2.300-3.500 4.800-6.400 6.700 5.300.6 11-.7 13.200-4.300.7-1.200.800-2.500.2-3.600z" fill="#3d73b5"/><path d="M956.800 60.400a2 2 0 0 1 3.200.6" stroke="#fff" stroke-width="1" fill="none"/><path d="M994.500 40.500h14v5h-14zM1001.500 40.500v5" fill="#fff" stroke="#777" stroke-width="1"/><path d="M1005.500 48.500h14v5h-14z" fill="#b4c7d9" stroke="#777" stroke-width="1"/><path d="M1012.500 48.500v5" stroke="#8aa" stroke-width="1"/><path d="M1002 51h-6.500M998.300 48.200l-2.900 2.800 2.900 2.800" stroke="#3d73b5" stroke-width="1.500" fill="none"/><path d="M994.500 56.500h14v10h-14zM1001.500 56.500v10M994.500 61.500h14" fill="#fff" stroke="#777" stroke-width="1"/><path d="M1035.500 40.500h14v5h-14zM1042.500 40.500v5" fill="#fff" stroke="#777" stroke-width="1"/><path d="M1041.500 48.500h9v5h-9z" fill="#b4c7d9" stroke="#777" stroke-width="1"/><path d="M1035.500 57.500h14v10h-14zM1042.500 57.500v10M1035.500 62.500h14" fill="#fff" stroke="#777" stroke-width="1"/><path d="M1050.500 46.500c4 2.500 8.500 6.500 13 11.500M1063.500 46.500c-5 3-9.500 7-13 11.500" stroke="#d9532c" stroke-width="1.700" fill="none"/><path d="M1077.500 38.500v5.500M1100 38.500v5.500M1079 41.500h19.500M1081.500 39.300l-2.400 2.200 2.400 2.200M1096 39.300l2.400 2.200-2.400 2.200" stroke="#3d73b5" stroke-width="1" fill="none"/><rect x="1077.500" y="45.500" width="27" height="20.500" fill="#fff" stroke="#7a7a7a" stroke-width="1"/><path d="M1084.500 45.500v20.500M1092.500 45.500v20.500M1099.500 45.500v20.500M1077.500 50.500h27M1077.500 60.500h27" stroke="#9a9a9a" stroke-width="1"/><rect x="1085" y="51" width="7" height="9" fill="#3d73b5"/><path d="M1077.500 66v3.500h6l1.500-1.500 1.500 1.500h7l2.500-3.500" fill="#fff" stroke="#7a7a7a" stroke-width="1"/><path d="M1139.500 41.500v-2.500h-13.500l7 6.500-7 6.500h13.500v-2.500" stroke="#444" stroke-width="2.200" fill="none" stroke-linejoin="miter"/><rect x="1126.500" y="62" width="13" height="14" fill="#fff" stroke="#777" stroke-width="1"/><rect x="1126" y="61.500" width="14" height="3" fill="#666"/><path d="M1133 66.500v6.500M1130 70.300l3 3 3-3" stroke="#3d73b5" stroke-width="1.500" fill="none"/><path d="M1127 92.500l7-7 4.800 4.200-6.300 6.300h-2.800z" fill="#e8839b"/><path d="M1127 92.500l2.700 3.500h2.800l1.500-1.500-4.500-4.500z" fill="#f4b6c4"/><path d="M1131 97.500h9" stroke="#777" stroke-width="1"/><text x="1219.800" y="52" font-family="Liberation Sans,sans-serif" font-size="15" font-weight="700" fill="#3d73b5">A</text><text x="1220.500" y="66.500" font-family="Liberation Sans,sans-serif" font-size="14" font-weight="700" fill="#a05cc0">Z</text><path d="M1232.800 48.500h16.400l-6.200 6.300v7.700h-3.600v-7.700z" fill="#7a7a7a"/><path d="M1240.600 55v6.500" stroke="#f1f1f1" stroke-width="1"/><circle cx="1281" cy="50.500" r="8.600" fill="#fdf7f2" stroke="#3d73b5" stroke-width="2.200"/><path d="M1274.500 57.200l-8.500 8.300" stroke="#3d73b5" stroke-width="3" stroke-linecap="round"/></svg>
<div class="b" style="left:1272px;top:143px;width:70px;height:26px;border:2px solid #217346;"></div>
<div class="b" style="left:1270px;top:164px;width:7px;height:7px;background:#217346;border:1px solid #dff1fa;"></div>
<span class="t" style="right:28px;top:149.64px;font-size:12.2px;line-height:15.86px;color:#1f5896;font-weight:700;font-family:'Liberation Sans','DejaVu Sans',sans-serif;transform:scaleX(0.7807);transform-origin:100% 50%;direction:rtl;">سوال ۴ از ۲۵</span>
<span class="t" style="left:1300px;top:175.81px;font-size:8.72px;line-height:11.34px;color:#7a7a7a;font-weight:400;font-family:'Liberation Sans','DejaVu Sans',sans-serif;direction:rtl;">تکمیل ٪۱۶</span>
<div class="b" style="left:827px;top:191px;width:466px;height:39px;background:#dec6d5;border:1px solid #ae3a5e;border-radius:6px;box-shadow:0 0 0 1px rgba(255,160,185,.45) inset;"></div>
<span class="t" style="right:203.4px;top:206.23px;font-size:8.0px;line-height:10.4px;color:#222;font-weight:700;font-family:'Liberation Sans','DejaVu Sans',sans-serif;transform:scaleX(0.9351);transform-origin:100% 50%;direction:rtl;">گروه: پروتئین حیوانی  |  منبع پروتئین، آهن و ویتامین B12</span>
<div class="b" style="left:1089px;top:237px;width:204px;height:74px;background:#fff;border:2px solid #1b4b7a;border-radius:11px;"></div>
<span class="t" style="left:1260.5px;top:247.42px;font-size:9.11px;line-height:11.84px;color:#111;font-weight:400;font-family:'Liberation Sans','DejaVu Sans',sans-serif;direction:rtl;">سوال</span>
<span class="t" style="right:108.7px;top:246.64px;font-size:10.2px;line-height:13.26px;color:#111;font-weight:400;font-family:'Liberation Sans','DejaVu Sans',sans-serif;direction:rtl;">4:</span>
<span class="t" style="left:1101px;top:273.64px;font-size:9.69px;line-height:12.6px;color:#111;font-weight:400;font-family:'Liberation Sans','DejaVu Sans',sans-serif;direction:rtl;">گوشت قرمز چند بار در هفته مصرف می‌کنید؟</span>
<span class="t" style="left:1159px;top:288.34px;font-size:10.0px;line-height:13.0px;color:#111;font-weight:400;font-family:'Liberation Sans','DejaVu Sans',sans-serif;direction:rtl;">(واحد اندازه‌گیری: بار در هفته)</span>
<div class="b" style="left:827px;top:324px;width:466px;height:29px;background:#f0f4fd;border:1px solid #b3c4dc;border-radius:5px;"></div>
<span class="t" style="right:243.3px;top:334.23px;font-size:8.2px;line-height:10.66px;color:#1d5591;font-weight:700;font-family:'Liberation Sans','DejaVu Sans',sans-serif;transform:scaleX(0.9314);transform-origin:100% 50%;direction:rtl;">لطفاً گزینه مناسب را انتخاب کنید:</span>
<div class="b" style="left:832.5px;top:361px;width:409.0px;height:28px;background:#fefefe;border-radius:5px;"></div>
<div class="b" style="left:1250px;top:361.1px;width:25px;height:25px;border-radius:50%;background:#fff;border:2px solid #9a9a9a;"></div>
<span class="t" style="left:1066px;top:370.0px;font-size:8.83px;line-height:11.48px;color:#151515;font-weight:400;font-family:'Liberation Sans','DejaVu Sans',sans-serif;direction:rtl;">1. هرگز یا کمتر از یکبار در ماه   (عدم مصرف)</span>
<div class="b" style="left:832.5px;top:394.3px;width:409.0px;height:28.0px;background:#fefefe;border-radius:5px;"></div>
<div class="b" style="left:1250px;top:394.40000000000003px;width:25px;height:25px;border-radius:50%;background:#fff;border:2px solid #9a9a9a;"></div>
<span class="t" style="left:1097.8px;top:403.27px;font-size:8.86px;line-height:11.52px;color:#151515;font-weight:400;font-family:'Liberation Sans','DejaVu Sans',sans-serif;direction:rtl;">2. 3-1 بار در ماه   (مصرف بسیار کم)</span>
<div class="b" style="left:832.5px;top:427.7px;width:409.0px;height:28.0px;background:#fefefe;border-radius:5px;"></div>
<div class="b" style="left:1250px;top:427.8px;width:25px;height:25px;border-radius:50%;background:#fff;border:2px solid #9a9a9a;"></div>
<span class="t" style="left:1122.7px;top:436.59px;font-size:8.94px;line-height:11.62px;color:#151515;font-weight:400;font-family:'Liberation Sans','DejaVu Sans',sans-serif;direction:rtl;">3. 1 بار در هفته   (مصرف کم)</span>
<div class="b" style="left:832.5px;top:461px;width:409.0px;height:28px;background:#fefefe;border-radius:5px;"></div>
<div class="b" style="left:1250px;top:461.1px;width:25px;height:25px;border-radius:50%;background:#fff;border:2px solid #9a9a9a;"></div>
<span class="t" style="left:1099.7px;top:470.07px;font-size:8.76px;line-height:11.39px;color:#151515;font-weight:400;font-family:'Liberation Sans','DejaVu Sans',sans-serif;direction:rtl;">4. 3-2 بار در هفته   (مصرف متوسط)</span>
<div class="b" style="left:832px;top:493px;width:410px;height:30px;background:#e9fbe8;border:1px solid #57c657;border-radius:5px;"></div>
<div class="b" style="left:1250px;top:494.20000000000005px;width:25px;height:25.500px;border-radius:50%;background:#33cc33;border:2px solid #0f7d12;"></div>
<span class="t" style="left:1108px;top:503.13px;font-size:9.2px;line-height:11.96px;color:#151515;font-weight:400;font-family:'Liberation Sans','DejaVu Sans',sans-serif;direction:rtl;">5. 6-4 بار در هفته   (مصرف زیاد)</span>
<div class="b" style="left:832.5px;top:528px;width:409.0px;height:28px;background:#fefefe;border-radius:5px;"></div>
<div class="b" style="left:1250px;top:528.1px;width:25px;height:25px;border-radius:50%;background:#fff;border:2px solid #9a9a9a;"></div>
<span class="t" style="left:1107px;top:536.36px;font-size:9.47px;line-height:12.31px;color:#151515;font-weight:400;font-family:'Liberation Sans','DejaVu Sans',sans-serif;direction:rtl;">6. 1 بار در روز   (مصرف روزانه)</span>
<div class="b" style="left:832.5px;top:561.4px;width:409.0px;height:28.0px;background:#fefefe;border-radius:5px;"></div>
<div class="b" style="left:1250px;top:561.5px;width:25px;height:25px;border-radius:50%;background:#fff;border:2px solid #9a9a9a;"></div>
<span class="t" style="left:1067.8px;top:570.19px;font-size:9.04px;line-height:11.75px;color:#151515;font-weight:400;font-family:'Liberation Sans','DejaVu Sans',sans-serif;direction:rtl;">7. 2 بار یا بیشتر در روز   (مصرف بسیار زیاد)</span>
<div class="b" style="left:1087px;top:599px;width:113px;height:35px;background:linear-gradient(90deg,#ff8f1f,#d87a20);border:2px solid #15159a;border-radius:7px;"></div>
<div class="b" style="left:947px;top:599px;width:114px;height:35px;background:linear-gradient(90deg,#36cf38,#27a22b);border:2px solid #0d7a14;border-radius:7px;"></div>
<div class="b" style="left:827px;top:600px;width:94px;height:34px;background:#9a9a9a;border:1px solid #7e7e7e;border-radius:6px;"></div>
<span class="t" style="right:205.2px;top:612.83px;font-size:7.8px;line-height:10.14px;color:#fff;font-weight:700;font-family:'Liberation Sans','DejaVu Sans',sans-serif;transform:scaleX(0.7764);transform-origin:100% 50%;direction:rtl;">سوال قبلی</span>
<span class="t" style="right:343px;top:612.83px;font-size:7.8px;line-height:10.14px;color:#fff;font-weight:700;font-family:'Liberation Sans','DejaVu Sans',sans-serif;transform:scaleX(0.8597);transform-origin:100% 50%;direction:rtl;">سوال بعدی</span>
<span class="t" style="right:472.8px;top:612.83px;font-size:7.8px;line-height:10.14px;color:#fff;font-weight:700;font-family:'Liberation Sans','DejaVu Sans',sans-serif;transform:scaleX(0.8433);transform-origin:100% 50%;direction:rtl;">صفحه اصلی</span>
<div class="b" style="left:22px;top:145px;width:1319px;height:508px;overflow:hidden;"><div class="b" style="left:791px;top:492px;width:481px;height:30px;background:#fffbc6;border:1px solid #eadf63;box-shadow:0 0 0 1px rgba(243,235,130,.55);border-radius:5px;"></div></div>
<span class="t" style="right:81.5px;top:643.43px;font-size:8.2px;line-height:10.66px;color:#222;font-weight:400;font-family:'Liberation Sans','DejaVu Sans',sans-serif;transform:scaleX(0.894);transform-origin:100% 50%;direction:rtl;">راهنمایی: پاسخ شما باید بر اساس مصرف غذایی معمول در یک ماه گذشته باشد. لطفاً با دقت پاسخ دهید، زیرا نتایج بر اساس پاسخ‌های شما تحلیل می‌شود.</span>
<div class="b" style="left:0px;top:654px;width:1366px;height:27px;background:#e6e6e6;"></div>
<div class="b" style="left:0px;top:681px;width:1366px;height:1px;background:#c9c9c9;"></div>
<div class="b" style="left:21px;top:660px;width:15px;height:15px;background:#fff;border:1px solid #ababab;"></div>
<svg class="b" style="left:26px;top:664px;" width="5" height="7" viewBox="0 0 5 7"><path d="M4.500 .3V6.700L.5 3.500Z" fill="#555"/></svg>
<div class="b" style="left:38px;top:661px;width:24px;height:13px;background:#d2d2d2;"></div>
<div class="b" style="left:62px;top:660px;width:453px;height:15px;background:#fff;border:1px solid #ababab;"></div>
<div class="b" style="left:515px;top:660px;width:15px;height:15px;background:#fff;border:1px solid #ababab;"></div>
<svg class="b" style="left:520px;top:664px;" width="5" height="7" viewBox="0 0 5 7"><path d="M.5 .3V6.700L4.500 3.500Z" fill="#555"/></svg>
<div class="b" style="left:545px;top:662.5px;width:2px;height:2.0px;background:#9a9a9a;"></div>
<div class="b" style="left:545px;top:666.5px;width:2px;height:2.0px;background:#9a9a9a;"></div>
<div class="b" style="left:545px;top:670.5px;width:2px;height:2.0px;background:#9a9a9a;"></div>
<svg class="b" style="left:1016px;top:658px;" width="18" height="18" viewBox="0 0 18 18"><circle cx="9" cy="9" r="7.300" fill="none" stroke="#6a6a6a" stroke-width="1.200"/><path d="M9 5v8M5 9h8" stroke="#6a6a6a" stroke-width="1.300"/></svg>
<div class="b" style="left:1068px;top:654px;width:104px;height:22px;background:#fff;border-left:1px solid #7b7b7b;border-right:1px solid #7b7b7b;"></div>
<div class="b" style="left:1072px;top:655px;width:98px;height:20px;background:linear-gradient(180deg,#ffffff 0%,#eef1f8 30%,#c9d5e6 65%,#9db3cc 100%);"></div>
<div class="b" style="left:1068px;top:676px;width:104px;height:2px;background:#1b6a3d;"></div>
<span class="t" style="left:1081.6px;top:658.84px;font-size:12.8px;line-height:16.64px;color:#1a6840;font-weight:700;font-family:'Liberation Sans',sans-serif;letter-spacing:-0.865px;">FFQ</span>
<span class="t" style="left:1109px;top:661.26px;font-size:10.28px;line-height:13.36px;color:#1a6840;font-weight:700;font-family:'Liberation Sans','DejaVu Sans',sans-serif;direction:rtl;">پرسشنامه</span>
<span class="t" style="left:1189px;top:658.25px;font-size:13.4px;line-height:17.42px;color:#333;font-weight:400;font-family:'Liberation Sans',sans-serif;letter-spacing:-0.095px;">magicfile.ir</span>
<div class="b" style="left:1265px;top:657px;width:1px;height:20px;background:#b5b5b5;"></div>
<svg class="b" style="left:1304px;top:662px;" width="6" height="9" viewBox="0 0 6 9"><path d="M5.500 .5V8.500L.5 4.500Z" fill="#c3c3c3"/></svg>
<svg class="b" style="left:1332px;top:662px;" width="6" height="9" viewBox="0 0 6 9"><path d="M.5 .5V8.500L5.500 4.500Z" fill="#c3c3c3"/></svg>
<div class="b" style="left:0px;top:682px;width:1366px;height:21px;background:#f1f1f1;"></div>
<span class="t" style="left:7.7px;top:685.34px;font-size:10.8px;line-height:14.04px;color:#444;font-weight:400;font-family:'Liberation Sans',sans-serif;letter-spacing:-0.184px;">Ready</span>
<svg class="b" style="left:57px;top:684px;" width="15" height="15" viewBox="0 0 15 15"><circle cx="4" cy="4" r="2.600" fill="#777"/><path d="M8.200 2.300h5.800v2h-5.800z" fill="#777"/><path d="M2.800 4.500h11v9h-11z" fill="none" stroke="#777" stroke-width="1"/><path d="M4.800 7.500h1.700M7.600 7.500h1.700M10.400 7.500h1.700M4.800 9.500h1.700M7.600 9.500h1.700M10.400 9.500h1.700M4.800 11.500h1.700M7.600 11.500h1.700M10.400 11.500h1.700" stroke="#777" stroke-width="1"/><rect x="1" y="1" width="6" height="6" fill="#f1f1f1"/><circle cx="4" cy="4" r="2.700" fill="#777"/></svg>
<div class="b" style="left:1074px;top:682px;width:38px;height:21px;background:#c8c8c8;"></div>
<svg class="b" style="left:1086px;top:685px;" width="13" height="13" viewBox="0 0 13 13"><path d="M.5 .5h12v12h-12zM4.500 .5v12M8.500 .5v12M.5 4.500h12M.5 8.500h12" fill="none" stroke="#5a5a5a" stroke-width="1"/></svg>
<svg class="b" style="left:1124px;top:685px;" width="14" height="13" viewBox="0 0 14 13"><path d="M.5 .5h13v12h-13z" fill="none" stroke="#5a5a5a" stroke-width="1"/><path d="M3.500 3.500h7v6h-7z" fill="none" stroke="#5a5a5a" stroke-width="1"/><path d="M5 5.500h4M5 7.500h4" stroke="#5a5a5a" stroke-width="1"/></svg>
<svg class="b" style="left:1162px;top:685px;" width="14" height="13" viewBox="0 0 14 13"><path d="M.5 .5h13v12h-13z" fill="none" stroke="#5a5a5a" stroke-width="1"/><path d="M4.500 .5v6M8.500 .5v6M.5 6.500h13" fill="none" stroke="#5a5a5a" stroke-width="1"/></svg>
<div class="b" style="left:1193px;top:690.5px;width:6px;height:2.0px;background:#555;"></div>
<div class="b" style="left:1203px;top:691px;width:100px;height:1px;background:#a0a0a0;"></div>
<div class="b" style="left:1253px;top:688px;width:1px;height:7px;background:#a0a0a0;"></div>
<div class="b" style="left:1236px;top:686px;width:4px;height:11px;background:#555;"></div>
<div class="b" style="left:1307px;top:690.5px;width:8px;height:2.0px;background:#555;"></div>
<div class="b" style="left:1310px;top:687.5px;width:2px;height:8.0px;background:#555;"></div>
<span class="t" style="left:1330.7px;top:686.24px;font-size:11px;line-height:14.3px;color:#444;font-weight:400;font-family:'Liberation Sans',sans-serif;letter-spacing:-0.572px;">70%</span>
<div class="b" style="left:0px;top:703px;width:1366px;height:2px;background:#101010;"></div>
</div>
</body></html>
